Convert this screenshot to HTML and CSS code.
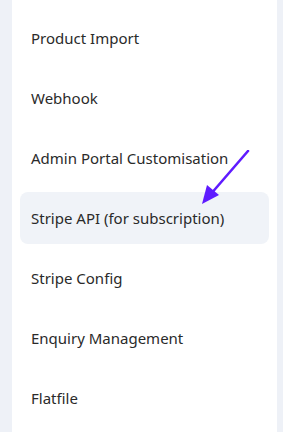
FILE: index.html
```html
<!DOCTYPE html>
<html lang="en">
<head>
  <meta charset="UTF-8">
  <meta name="viewport" content="width=device-width, initial-scale=1.0">
  <title>Settings</title>
  <link rel="stylesheet" href="styles.css">
</head>
<body>

  <div class="sidebar">
    <ul class="menu">
      <li class="menu-item">Product Import</li>
      <li class="menu-item">Webhook</li>
      <li class="menu-item">Admin Portal Customisation</li>
      <li class="menu-item active">
        Stripe API (for subscription)
        <svg class="pointer" width="60" height="62" viewBox="0 0 60 62">
          <line x1="54" y1="1" x2="16" y2="45" stroke="#5f1bff" stroke-width="2.6" stroke-linecap="round"/>
          <polygon points="8,54 13,35 25,45" fill="#5f1bff"/>
        </svg>
      </li>
      <li class="menu-item">Stripe Config</li>
      <li class="menu-item">Enquiry Management</li>
      <li class="menu-item">Flatfile</li>
    </ul>
  </div>

</body>
</html>
```

FILE: styles.css
```css
body {
  font-family: "Noto Sans", "Open Sans", Arial, sans-serif;
  background-color: #eef1f7;
  margin: 0;
  padding: 0 6px 0 12px;
}

.sidebar {
  background-color: #ffffff;
  height: 432px;
  padding: 0 8px;
}

.menu {
  list-style: none;
  margin: 0;
  padding: 12px 0 0;
  display: flex;
  flex-direction: column;
  gap: 8px;
}

.menu-item {
  position: relative;
  height: 52px;
  display: flex;
  align-items: center;
  padding: 0 11px;
  border-radius: 8px;
  font-size: 15px;
  color: #2a2a2a;
}

.menu-item.active {
  background-color: #f0f3f8;
}

.pointer {
  position: absolute;
  left: 174px;
  top: -42px;
}
```
